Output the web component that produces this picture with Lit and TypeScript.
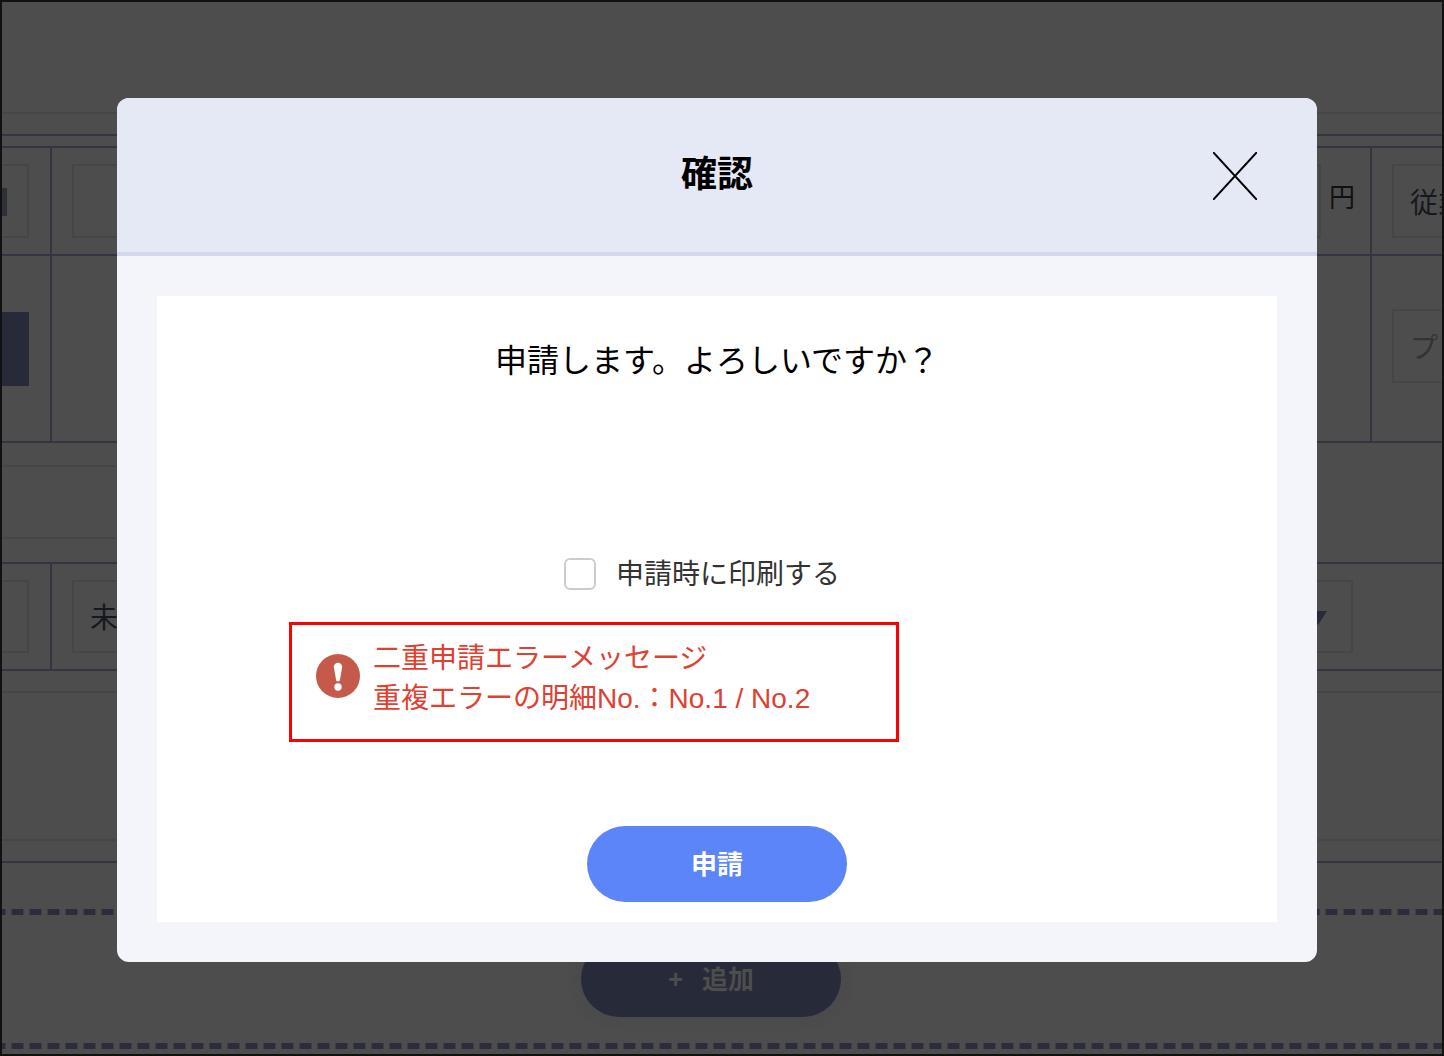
import { LitElement, html, css } from "lit";
import { customElement } from "lit/decorators.js";

@customElement("app-root")
export class AppRoot extends LitElement {
  static styles = css`
    :host {
      display: block;
      width: 1444px;
      height: 1056px;
      font-family: "Liberation Sans", "Noto Sans CJK JP", sans-serif;
    }
    * { box-sizing: border-box; }
    .page {
      position: relative;
      width: 1444px;
      height: 1056px;
      border: 2px solid #111;
      background: #4d4d4d;
      overflow: hidden;
    }
    .faint { height: 2px; background: #464646; }
    .dark { height: 2px; background: #333640; }
    .short { width: 600px; }
    .t1 { margin-top: 110px; }
    .t2 { margin-top: 20px; }
    .t3 { margin-top: 10px; }
    .m22 { margin-top: 22px; }
    .m70 { margin-top: 70px; }
    .m20 { margin-top: 20px; }
    .m146 { margin-top: 146px; }
    .m46 { margin-top: 46px; }
    .m26 { margin-top: 26px; }
    .row {
      display: grid;
      grid-template-columns: 48px 1322px 70px;
      border-top: 2px solid #333640;
    }
    .r1 { height: 108px; }
    .r2 { height: 189px; border-bottom: 2px solid #333640; }
    .r3 { height: 109px; margin-top: 23px; border-bottom: 2px solid #333640; }
    .cell { position: relative; overflow: hidden; min-width: 0; }
    .mid { border-left: 2px solid #333640; border-right: 2px solid #333640; }
    .r3 .mid { border-right: 0; }
    .cellflex { display: flex; align-items: center; height: 100%; }
    .box {
      border: 2px solid #464646;
      height: 74px;
      font-size: 28px;
      color: #16181f;
      display: flex;
      align-items: center;
      white-space: nowrap;
    }
    .r3 .box { height: 73px; margin-bottom: 1px; }
    .lc { justify-content: flex-end; padding-right: 21px; }
    .lc .box { width: 60px; flex: none; }
    .mid .cellflex { padding-left: 20px; padding-right: 15px; gap: 8px; }
    .r3 .mid .cellflex { padding-right: 19px; }
    .mid .box { flex: 1; padding-left: 16px; }
    .unit { font-size: 26px; color: #111; line-height: 1; margin-bottom: 6px; }
    .rc { padding-left: 20px; justify-content: flex-start; }
    .rc .box { width: 120px; flex: none; padding-left: 16px; }
    .rc .box.muted { color: #333; margin-bottom: 6px; }
    .ico {
      position: absolute;
      left: 0;
      top: 40px;
      width: 5px;
      height: 28px;
      background: #2e303a;
      filter: blur(0.6px);
    }
    .darkbtn {
      width: 60px;
      height: 74px;
      background: #272a38;
      flex: none;
      position: relative;
      overflow: hidden;
    }
    .darkbtn i {
      position: absolute;
      left: -4px;
      top: 47px;
      width: 9px;
      height: 3px;
      background: #4d4d4d;
      transform: rotate(45deg);
    }
    .caret {
      position: absolute;
      right: 45px;
      top: 47px;
      width: 0;
      height: 0;
      border-left: 9px solid transparent;
      border-right: 9px solid transparent;
      border-top: 14px solid #272a38;
    }
    .dash {
      height: 6px;
      background: repeating-linear-gradient(90deg, #2b2d3d 0 12px, transparent 12px 18px);
      background-position: 9.5px 0;
    }
    .addwrap { display: flex; justify-content: center; margin-top: 26px; }
    .add {
      width: 260px;
      height: 76px;
      margin-right: 22px;
      padding-bottom: 4px;
      border-radius: 38px;
      background: #272a38;
      box-shadow: 0 0 14px rgba(60, 50, 70, 0.25);
      color: #4d4d4d;
      font-size: 26px;
      font-weight: 700;
      display: flex;
      align-items: center;
      justify-content: center;
      gap: 19px;
    }
    .add .plus { font-size: 26px; line-height: 1; margin-top: 3px; }

    .modal {
      position: absolute;
      left: 115px;
      top: 96px;
      width: 1200px;
      height: 864px;
      border-radius: 12px;
      background: #f4f5fa;
      overflow: hidden;
      display: flex;
      flex-direction: column;
    }
    .head {
      height: 158px;
      flex: none;
      background: #e5e8f5;
      border-bottom: 4px solid #d4d8ef;
      display: flex;
      align-items: center;
      justify-content: center;
      position: relative;
    }
    .title { font-size: 36px; font-weight: 700; color: #000; line-height: 1; }
    .close { position: absolute; left: 1096px; top: 54px; width: 44px; height: 48px; display: block; }
    .bodywrap { flex: 1; padding: 40px; }
    .content {
      background: #fff;
      height: 626px;
      display: flex;
      flex-direction: column;
      align-items: center;
    }
    .msg { margin-top: 44px; font-size: 32px; line-height: 42px; color: #000; }
    .chk {
      margin-top: 176px;
      display: flex;
      align-items: flex-start;
      gap: 20px;
      margin-left: -30px;
    }
    .cb { width: 32px; height: 32px; border: 2px solid #ccc; border-radius: 6px; background: #fff; }
    .chk span { font-size: 28px; line-height: 32px; color: #333; margin-top: 1px; }
    .err {
      align-self: flex-start;
      margin-left: 132px;
      margin-top: 31px;
      width: 610px;
      height: 120px;
      border: 3px solid #f00;
      display: flex;
      align-items: center;
      padding: 0 0 6px 24px;
      gap: 13px;
    }
    .err svg { width: 44px; height: 44px; flex: none; margin-bottom: 6px; }
    .err .txt { font-size: 28px; line-height: 40px; color: #e04030; white-space: nowrap; }
    .submit {
      margin-top: 84px;
      width: 260px;
      height: 76px;
      border: 0;
      border-radius: 38px;
      padding: 0 0 4px;
      background: #5b85f8;
      color: #fff;
      font-family: inherit;
      font-size: 26px;
      font-weight: 700;
    }
  `;

  render() {
    return html`
      <div class="page">
        <div class="faint t1"></div>
        <div class="dark t2"></div>
        <div class="t3"></div>
        <div class="row r1">
          <div class="cell"><div class="cellflex lc"><div class="box"></div></div><div class="ico"></div></div>
          <div class="cell mid"><div class="cellflex"><div class="box"></div><span class="unit">円</span></div></div>
          <div class="cell"><div class="cellflex rc"><div class="box">従業員</div></div></div>
        </div>
        <div class="row r2">
          <div class="cell"><div class="cellflex lc"><div class="darkbtn"><i></i></div></div></div>
          <div class="cell mid"></div>
          <div class="cell"><div class="cellflex rc"><div class="box muted">プロジェクト</div></div></div>
        </div>
        <div class="faint short m22"></div>
        <div class="faint short m70"></div>
        <div class="row r3">
          <div class="cell"><div class="cellflex lc"><div class="box"></div></div></div>
          <div class="cell mid"><div class="cellflex"><div class="box">未選択</div></div><div class="caret"></div></div>
          <div class="cell"></div>
        </div>
        <div class="faint m20"></div>
        <div class="faint m146"></div>
        <div class="dark m20"></div>
        <div class="dash m46"></div>
        <div class="addwrap">
          <div class="add"><span class="plus">+</span><span>追加</span></div>
        </div>
        <div class="dash m26"></div>

        <div class="modal">
          <div class="head">
            <div class="title">確認</div>
            <svg class="close" viewBox="0 0 44 48" fill="none" stroke="#000" stroke-width="2"><path d="M0 0 44 48M44 0 0 48"/></svg>
          </div>
          <div class="bodywrap">
            <div class="content">
              <div class="msg">申請します。よろしいですか&#xFF1F;</div>
              <label class="chk"><div class="cb"></div><span>申請時に印刷する</span></label>
              <div class="err">
                <svg viewBox="0 0 44 44">
                  <circle cx="22" cy="22" r="22" fill="#c55a4a"/>
                  <path d="M17.8 13a4.2 4.2 0 0 1 8.4 0L24 25.5a2 2 0 0 1-4 0Z" fill="#fff"/>
                  <circle cx="22" cy="33" r="3.7" fill="#fff"/>
                </svg>
                <div class="txt">二重申請エラーメッセージ<br />重複エラーの明細No.&#xFF1A;No.1 / No.2</div>
              </div>
              <button class="submit">申請</button>
            </div>
          </div>
        </div>
      </div>
    `;
  }
}
